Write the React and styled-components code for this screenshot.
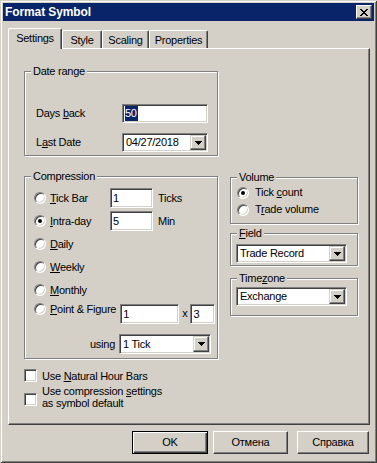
import React from 'react';
import styled, { createGlobalStyle, css } from 'styled-components';

const FACE = '#d4d0c8';

const Global = createGlobalStyle`
  html, body { margin: 0; padding: 0; background: ${FACE}; }
  body {
    font-family: "Liberation Sans", Arial, sans-serif;
    font-size: 11px;
    letter-spacing: -0.25px;
    color: #000;
  }
  * { box-sizing: border-box; }
  u { text-decoration-thickness: 1px; text-underline-offset: 1px; }
`;

const sunken = css`
  border: 1px solid;
  border-color: #808080 #fff #fff #808080;
  box-shadow: inset 1px 1px #404040, inset -1px -1px ${FACE};
`;

const raised = css`
  border: 1px solid;
  border-color: #fff #404040 #404040 #fff;
  box-shadow: inset -1px -1px #808080, inset 1px 1px ${FACE};
`;

const raisedSoft = css`
  border: 1px solid;
  border-color: ${FACE} #404040 #404040 ${FACE};
  box-shadow: inset -1px -1px #808080, inset 1px 1px #fff;
`;

const Window = styled.div`
  width: 377px;
  height: 463px;
  background: ${FACE};
  box-shadow: inset 1px 1px ${FACE}, inset -1px -1px #404040,
    inset 2px 2px #fff, inset -2px -2px #808080;
  padding: 3px;
  display: flex;
  flex-direction: column;
`;

const TitleBar = styled.div`
  height: 18px;
  background: #0a246a;
  color: #fff;
  display: flex;
  align-items: center;
  justify-content: space-between;
  padding: 0 2px 0 2px;
`;

const Title = styled.span`
  font-weight: bold;
  font-size: 12px;
  letter-spacing: -0.1px;
`;

const CloseButton = styled.div`
  width: 16px;
  height: 14px;
  background: ${FACE};
  ${raised};
  display: flex;
  align-items: center;
  justify-content: center;
`;

const Body = styled.div`
  flex: 1;
  display: flex;
  flex-direction: column;
  padding: 7px 4px 0 5px;
`;

const TabStrip = styled.div`
  display: flex;
  align-items: flex-end;
  height: 21px;
  margin-bottom: -1px;
  position: relative;
  z-index: 1;
`;

const Tab = styled.div`
  width: ${(p) => p.$w}px;
  height: ${(p) => (p.$active ? 21 : 18)}px;
  margin-bottom: ${(p) => (p.$active ? 0 : 1)}px;
  background: ${FACE};
  border-top: 1px solid #fff;
  border-left: 1px solid #fff;
  border-right: 1px solid #404040;
  border-top-left-radius: 2px;
  border-top-right-radius: 2px;
  box-shadow: inset -1px 0 #808080;
  display: flex;
  justify-content: center;
  padding-top: 3px;
  line-height: 13px;
`;

const Panel = styled.div`
  height: 377px;
  border-top: 1px solid #fff;
  border-left: 1px solid #fff;
  border-right: 1px solid #404040;
  border-bottom: 1px solid #404040;
  box-shadow: inset -1px -1px #808080;
  padding: 22px 0 0 15px;
`;

const Grid = styled.div`
  display: grid;
  grid-template-columns: 194px 128px;
  grid-template-rows: auto auto;
  column-gap: 12px;
  row-gap: 20px;
  align-items: start;
`;

const Cell = styled.div`
  grid-column: ${(p) => p.$col};
  grid-row: ${(p) => p.$row};
  margin-top: ${(p) => p.$mt || 0}px;
  display: flex;
  flex-direction: column;
`;

const GroupBox = styled.div`
  position: relative;
  height: ${(p) => p.$h}px;
  margin-top: ${(p) => p.$mt || 0}px;
  border: 1px solid #808080;
  box-shadow: inset 1px 1px #fff, 1px 1px #fff;
  padding: ${(p) => p.$pad};
`;

const Legend = styled.span`
  position: absolute;
  top: -7px;
  left: 6px;
  padding: 0 2px;
  background: ${FACE};
  line-height: 13px;
`;

const FieldRow = styled.div`
  display: flex;
  align-items: center;
  margin-top: ${(p) => p.$mt || 0}px;
`;

const FieldLabel = styled.span`
  width: ${(p) => p.$w}px;
  line-height: 13px;
`;

const TextBox = styled.div`
  width: ${(p) => p.$w}px;
  height: ${(p) => p.$h}px;
  margin-top: ${(p) => p.$mt || 0}px;
  background: #fff;
  ${sunken};
  padding: 1px 2px;
  display: flex;
  align-items: center;
  line-height: 13px;
  flex-shrink: 0;
`;

const Selected = styled.span`
  background: #0a246a;
  color: #fff;
  line-height: 15px;
  padding-right: 1px;
`;

const ComboBox = styled.div`
  width: ${(p) => p.$w}px;
  height: ${(p) => p.$h}px;
  background: #fff;
  ${sunken};
  padding: 1px;
  display: flex;
  align-items: stretch;
  flex-shrink: 0;
`;

const ComboText = styled.span`
  flex: 1;
  display: flex;
  align-items: center;
  padding-left: 2px;
  line-height: 13px;
  white-space: nowrap;
  overflow: hidden;
`;

const DropButton = styled.span`
  width: 16px;
  background: ${FACE};
  ${raisedSoft};
  display: flex;
  align-items: center;
  justify-content: center;
`;

const OptionList = styled.div`
  display: flex;
  flex-direction: column;
  gap: ${(p) => p.$gap || 0}px;
`;

const OptionRow = styled.div`
  display: flex;
  align-items: ${(p) => (p.$top ? 'flex-start' : 'center')};
  height: ${(p) => p.$h}px;
`;

const RadioMark = styled.span`
  position: relative;
  width: 12px;
  height: 12px;
  flex-shrink: 0;
  border-radius: 50%;
  background: #fff;
  border: 1px solid;
  border-color: #808080 #fff #fff #808080;
  box-shadow: inset 1px 1px #404040, inset -1px -1px ${FACE};
  margin-right: ${(p) => p.$gap}px;
  ${(p) =>
    p.$checked &&
    css`
      &::after {
        content: '';
        position: absolute;
        left: 3px;
        top: 3px;
        width: 4px;
        height: 4px;
        border-radius: 50%;
        background: #000;
      }
    `}
`;

const OptionLabel = styled.span`
  width: ${(p) => (p.$w ? `${p.$w}px` : 'auto')};
  margin-right: ${(p) => p.$mr || 0}px;
  line-height: 13px;
  white-space: nowrap;
  flex-shrink: 0;
`;

const Unit = styled.span`
  margin: 0 ${(p) => p.$mr || 0}px 0 ${(p) => p.$ml}px;
  line-height: 13px;
  align-self: center;
`;

const UsingRow = styled.div`
  display: flex;
  align-items: center;
  margin: 10px 0 0 56px;
`;

const CheckList = styled.div`
  display: flex;
  flex-direction: column;
  gap: 3px;
  margin-top: 10px;
`;

const CheckRow = styled.div`
  display: flex;
  align-items: ${(p) => (p.$top ? 'flex-start' : 'center')};
`;

const CheckMark = styled.span`
  width: 13px;
  height: 13px;
  flex-shrink: 0;
  background: #fff;
  ${sunken};
  margin: ${(p) => p.$mt || 0}px 5px 0 0;
`;

const CheckLabel = styled.span`
  line-height: 12px;
`;

const ButtonRow = styled.div`
  display: flex;
  justify-content: flex-end;
  margin-top: 6px;
  padding-right: 1px;
`;

const Button = styled.div`
  width: ${(p) => p.$w}px;
  height: 23px;
  margin-left: ${(p) => p.$ml || 0}px;
  background: ${FACE};
  display: flex;
  align-items: center;
  justify-content: center;
  line-height: 13px;
  ${(p) =>
    p.$default
      ? css`
          border: 1px solid #000;
          box-shadow: inset 1px 1px #fff, inset -1px -1px #404040,
            inset -2px -2px #808080;
        `
      : raised}
`;

const CloseGlyph = () => (
  <svg width="8" height="7" viewBox="0 0 8 7" shapeRendering="crispEdges">
    <path
      fill="#000"
      d="M0 0h2v1h1v1h2v-1h1v-1h2v1h-1v1h-1v1h-1v1h1v1h1v1h1v1h-2v-1h-1v-1h-2v1h-1v1h-2v-1h1v-1h1v-1h1v-1h-1v-1h-1v-1h-1z"
    />
  </svg>
);

const ArrowGlyph = () => (
  <svg width="7" height="4" viewBox="0 0 7 4" shapeRendering="crispEdges">
    <path fill="#000" d="M0 0h7v1h-1v1h-1v1h-1v1h-1v-1h-1v-1h-1v-1h-1z" />
  </svg>
);

const Combo = ({ w, h, children }) => (
  <ComboBox $w={w} $h={h}>
    <ComboText>{children}</ComboText>
    <DropButton>
      <ArrowGlyph />
    </DropButton>
  </ComboBox>
);

const Option = ({ checked, gap = 4, children, w, mr }) => (
  <>
    <RadioMark $checked={checked} $gap={gap} />
    <OptionLabel $w={w} $mr={mr}>
      {children}
    </OptionLabel>
  </>
);

export default function App() {
  return (
    <>
      <Global />
      <Window>
        <TitleBar>
          <Title>Format Symbol</Title>
          <CloseButton>
            <CloseGlyph />
          </CloseButton>
        </TitleBar>
        <Body>
          <TabStrip>
            <Tab $active $w={54}>Settings</Tab>
            <Tab $w={40}>Style</Tab>
            <Tab $w={47}>Scaling</Tab>
            <Tab $w={59}>Properties</Tab>
          </TabStrip>
          <Panel>
            <Grid>
              <Cell $col={1} $row={1}>
                <GroupBox $h={85} $pad="32px 0 0 11px">
                  <Legend>Date range</Legend>
                  <FieldRow>
                    <FieldLabel $w={86}>
                      Days <u>b</u>ack
                    </FieldLabel>
                    <TextBox $w={86} $h={19}>
                      <Selected>50</Selected>
                    </TextBox>
                  </FieldRow>
                  <FieldRow $mt={10}>
                    <FieldLabel $w={86}>
                      L<u>a</u>st Date
                    </FieldLabel>
                    <Combo w={86} h={19}>
                      04/27/2018
                    </Combo>
                  </FieldRow>
                </GroupBox>
              </Cell>

              <Cell $col={1} $row={2}>
                <GroupBox $h={183} $pad="11px 0 0 9px">
                  <Legend>Compression</Legend>
                  <OptionList $gap={3}>
                    <OptionRow $h={20}>
                      <Option w={60}>
                        <u>T</u>ick Bar
                      </Option>
                      <TextBox $w={43} $h={20}>1</TextBox>
                      <Unit $ml={5}>Ticks</Unit>
                    </OptionRow>
                    <OptionRow $h={20}>
                      <Option checked w={60}>
                        <u>I</u>ntra-day
                      </Option>
                      <TextBox $w={43} $h={20}>5</TextBox>
                      <Unit $ml={5}>Min</Unit>
                    </OptionRow>
                    <OptionRow $h={20}>
                      <Option>
                        <u>D</u>aily
                      </Option>
                    </OptionRow>
                    <OptionRow $h={20}>
                      <Option>
                        <u>W</u>eekly
                      </Option>
                    </OptionRow>
                    <OptionRow $h={20}>
                      <Option>
                        <u>M</u>onthly
                      </Option>
                    </OptionRow>
                    <OptionRow $h={21} $top>
                      <Option mr={4}>
                        <u>P</u>oint &amp; Figure
                      </Option>
                      <TextBox $w={59} $h={20} $mt={1}>1</TextBox>
                      <Unit $ml={3} $mr={3}>x</Unit>
                      <TextBox $w={25} $h={20} $mt={1}>3</TextBox>
                    </OptionRow>
                  </OptionList>
                  <UsingRow>
                    <Unit $ml={0} $mr={4}>using</Unit>
                    <Combo w={92} h={20}>
                      1 Tick
                    </Combo>
                  </UsingRow>
                </GroupBox>
              </Cell>

              <Cell $col={2} $row={2} $mt={1}>
                <GroupBox $h={47} $pad="6px 0 0 6px">
                  <Legend>Volume</Legend>
                  <OptionList>
                    <OptionRow $h={17}>
                      <Option checked gap={6}>
                        Tick <u>c</u>ount
                      </Option>
                    </OptionRow>
                    <OptionRow $h={17}>
                      <Option gap={6}>
                        T<u>r</u>ade volume
                      </Option>
                    </OptionRow>
                  </OptionList>
                </GroupBox>
                <GroupBox $h={33} $mt={9} $pad="10px 0 0 5px">
                  <Legend>
                    <u>F</u>ield
                  </Legend>
                  <Combo w={111} h={19}>
                    Trade Record
                  </Combo>
                </GroupBox>
                <GroupBox $h={38} $mt={12} $pad="8px 0 0 5px">
                  <Legend>
                    Time<u>z</u>one
                  </Legend>
                  <Combo w={111} h={19}>
                    Exchange
                  </Combo>
                </GroupBox>
              </Cell>
            </Grid>

            <CheckList>
              <CheckRow>
                <CheckMark />
                <CheckLabel>
                  Use <u>N</u>atural Hour Bars
                </CheckLabel>
              </CheckRow>
              <CheckRow $top>
                <CheckMark $mt={8} />
                <CheckLabel>
                  Use compression <u>s</u>ettings
                  <br />
                  as symbol default
                </CheckLabel>
              </CheckRow>
            </CheckList>
          </Panel>
          <ButtonRow>
            <Button $default $w={76}>OK</Button>
            <Button $w={75} $ml={5}>Отмена</Button>
            <Button $w={72} $ml={9}>Справка</Button>
          </ButtonRow>
        </Body>
      </Window>
    </>
  );
}
